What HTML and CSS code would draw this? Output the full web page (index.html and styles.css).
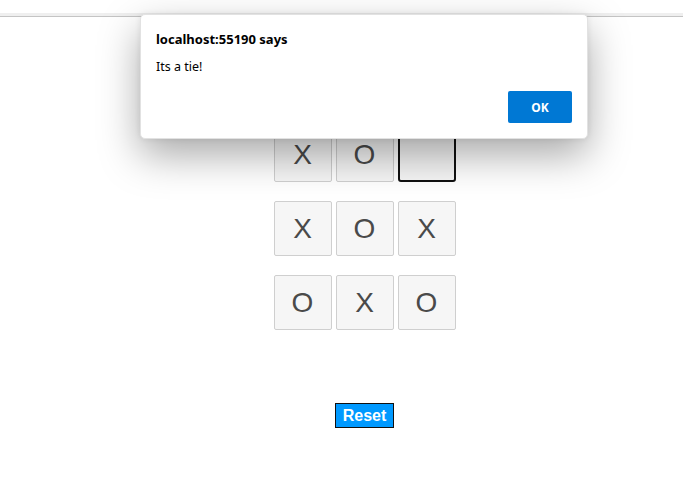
FILE: index.html
```html
<!DOCTYPE html>
<html>
<head>
<meta charset="utf-8">
<link rel="stylesheet" href="styles.css">
</head>
<body>
<div class="topstrip"></div>
<main class="game">
  <div class="board">
    <div class="row">
      <div class="cell">X</div>
      <div class="cell">O</div>
      <div class="cell focused"></div>
    </div>
    <div class="row">
      <div class="cell">X</div>
      <div class="cell">O</div>
      <div class="cell">X</div>
    </div>
    <div class="row">
      <div class="cell">O</div>
      <div class="cell">X</div>
      <div class="cell">O</div>
    </div>
  </div>
  <button class="reset">Reset</button>
</main>
<div class="dialog">
  <div class="dialog-title">localhost:55190 says</div>
  <div class="dialog-msg">Its a tie!</div>
  <div class="dialog-actions"><button class="ok">OK</button></div>
</div>
</body>
</html>
```
FILE: styles.css
```css
html, body {
  margin: 0;
  padding: 0;
  background: #fff;
  width: 683px;
  height: 478px;
  overflow: hidden;
}
.topstrip {
  margin-top: 13px;
  height: 3px;
  background: #efefef;
  border-bottom: 1px solid #c4c4c4;
}
.game {
  padding-left: 46px;
  width: 637px;
  display: flex;
  flex-direction: column;
  align-items: center;
  padding-top: 110px;
}
.board {
  display: flex;
  flex-direction: column;
  gap: 19px;
}
.row {
  display: flex;
  gap: 4px;
}
.cell {
  box-sizing: border-box;
  width: 58px;
  height: 55px;
  background: #f6f6f6;
  border: 1px solid #cfcfcf;
  border-radius: 2px;
  display: flex;
  align-items: center;
  justify-content: center;
  font-family: "Liberation Sans", Arial, sans-serif;
  font-size: 28px;
  color: #4a4a4a;
}
.cell.focused {
  border: 2px solid #111;
  border-radius: 3px;
}
.reset {
  margin-top: 73px;
  width: 59px;
  height: 25px;
  box-sizing: border-box;
  background: #0099ff;
  border: 1px solid #111;
  border-radius: 0;
  color: #fff;
  font-family: "Liberation Sans", Arial, sans-serif;
  font-weight: bold;
  font-size: 16px;
  padding: 0;
}
.dialog {
  position: absolute;
  left: 140px;
  top: 14px;
  width: 448px;
  height: 125px;
  box-sizing: border-box;
  background: #fff;
  border-radius: 5px;
  border: 1px solid #e2e2e2;
  box-shadow: 0 16px 40px rgba(0,0,0,0.34), 0 0 6px rgba(0,0,0,0.08);
  padding: 15px 15px 0 15px;
  font-family: "Noto Sans", "Open Sans", sans-serif;
  color: #000;
}
.dialog-title {
  font-weight: bold;
  font-size: 13px;
  line-height: 18px;
}
.dialog-msg {
  font-size: 12.5px;
  line-height: 18px;
  margin-top: 10px;
}
.dialog-actions {
  display: flex;
  justify-content: flex-end;
  margin-top: 15px;
}
.ok {
  width: 64px;
  height: 32px;
  background: #0078d4;
  color: #fff;
  border: none;
  border-radius: 2px;
  font-family: "Noto Sans", "Open Sans", sans-serif;
  font-weight: bold;
  font-size: 12px;
  padding: 0;
}
```
